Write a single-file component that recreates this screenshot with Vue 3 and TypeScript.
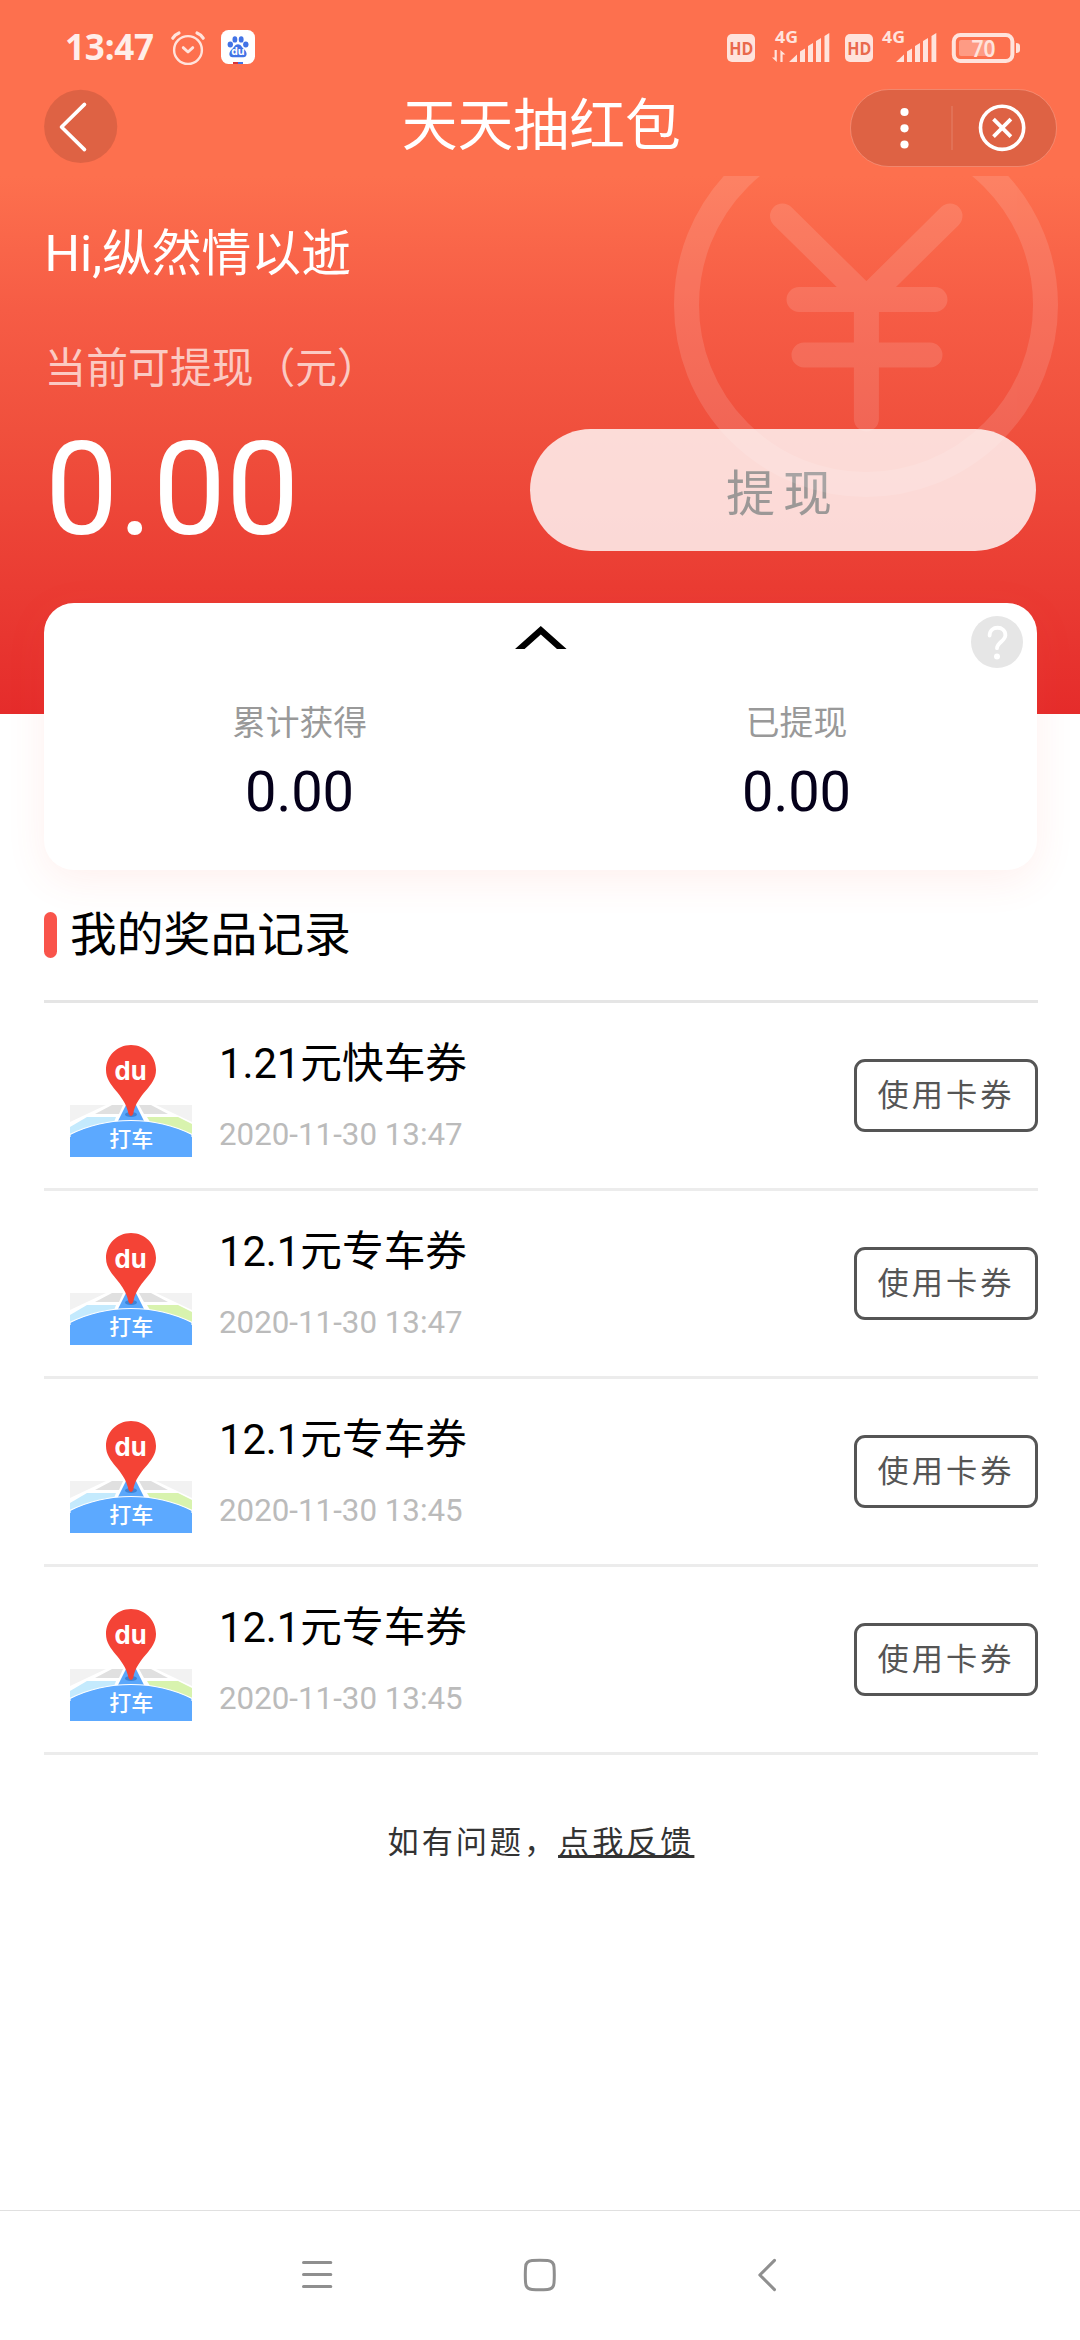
<script setup lang="ts">
interface Prize {
  id: number
  title: string
  time: string
}

interface Stat {
  label: string
  value: string
}

const prizes: Prize[] = [
  { id: 1, title: '1.21元快车券', time: '2020-11-30 13:47' },
  { id: 2, title: '12.1元专车券', time: '2020-11-30 13:47' },
  { id: 3, title: '12.1元专车券', time: '2020-11-30 13:45' },
  { id: 4, title: '12.1元专车券', time: '2020-11-30 13:45' },
]

const stats: Stat[] = [
  { label: '累计获得', value: '0.00' },
  { label: '已提现', value: '0.00' },
]
</script>

<template>
  <div class="screen">
    <section class="hero">
      <svg class="watermark" width="400" height="330" viewBox="666 176 400 330" fill="none">
        <g opacity="0.12" stroke="#fff" stroke-width="25" stroke-linecap="round">
          <circle cx="866" cy="305" r="179.5" />
          <path d="M782.5 216L866.4 298.7L950 216M799 299.5H935M804 355H930M866.4 299V419" />
        </g>
      </svg>

      <header class="status">
        <div class="status-left">
          <span class="clock">13:47</span>
          <svg class="alarm" width="36" height="38" viewBox="170 29 36 38" fill="none" stroke="#ffe3dc" stroke-linecap="round">
            <circle cx="188" cy="50" r="13.9" stroke-width="2.4" />
            <path d="M183.2 47.6L188 52L192.8 47.6" stroke-width="2.8" stroke-linejoin="round" />
            <path d="M172.8 38.2Q175 34.6 179 33M203.2 38.2Q201 34.6 197 33" stroke-width="3.2" />
          </svg>
          <svg class="baidu" width="34" height="34" viewBox="0 0 34 34">
            <rect width="34" height="34" rx="7.5" fill="#fff" />
            <g fill="#4273e6">
              <ellipse cx="9.3" cy="14.4" rx="2.7" ry="3" />
              <ellipse cx="13.9" cy="9.4" rx="2.4" ry="3.2" />
              <ellipse cx="20.2" cy="9.4" rx="2.4" ry="3.2" />
              <ellipse cx="24.8" cy="14.4" rx="2.7" ry="3" />
              <path d="M17 14.2C20 14.2 20.8 17.3 23.4 19.5C26.6 22.3 26.4 27.2 22.4 27.2H11.6C7.6 27.2 7.4 22.3 10.6 19.5C13.2 17.3 14 14.2 17 14.2Z" />
            </g>
            <text x="17" y="25.4" text-anchor="middle" class="paw-text">du</text>
            <rect x="12" y="32" width="5" height="2" fill="#d8343a" />
            <rect x="17" y="32" width="5" height="2" fill="#4273e6" />
          </svg>
        </div>
        <svg class="status-right" width="300" height="60" viewBox="724 10 300 60" fill="#ffe3dc">
          <g v-for="dx in [0, 118]" :key="dx" :transform="`translate(${dx} 0)`">
            <rect x="727" y="34" width="28" height="28" rx="5" />
            <text x="741.2" y="55" text-anchor="middle" textLength="24" lengthAdjust="spacingAndGlyphs" class="hd">HD</text>
          </g>
          <g v-for="dx in [0, 107]" :key="'s' + dx" :transform="`translate(${dx} 0)`">
            <text x="786.5" y="43.2" text-anchor="middle" textLength="23" lengthAdjust="spacingAndGlyphs" class="net">4G</text>
            <path d="M789 62L797 54.6V62ZM800 62V51.6L805 48.6V62ZM808 62V46L813 43V62ZM816 62V41L821 38V62ZM824.5 62V36L829.3 33V62Z" />
          </g>
          <path d="M774.6 50H776.8V62L772 57.4H774.6ZM780.4 62V50L785.4 54.6H782.6V62Z" />
          <rect x="953.8" y="35" width="58.6" height="26" rx="6.5" fill="none" stroke="#ffe3dc" stroke-width="4" />
          <rect x="959" y="40" width="33" height="16" rx="2" opacity="0.38" />
          <path d="M1016 43Q1020 43 1020 46V50Q1020 53 1016 53Z" />
          <text x="983.5" y="56.6" text-anchor="middle" textLength="24" lengthAdjust="spacingAndGlyphs" class="battery">70</text>
        </svg>
      </header>

      <nav class="titlebar">
        <button class="back" aria-label="返回">
          <svg width="74" height="74" viewBox="0 0 74 74" fill="none">
            <circle cx="36.7" cy="37.4" r="36.6" fill="#000" opacity="0.12" />
            <path d="M40.5 15.4L17.5 38L40.5 60.6" stroke="#fff" stroke-width="3.6" stroke-linecap="round" stroke-linejoin="round" />
          </svg>
        </button>
        <h1 class="title">天天抽红包</h1>
        <svg width="207" height="78" viewBox="849.5 89 207 78" fill="none">
          <rect x="850" y="89.5" width="206" height="77" rx="38.5" fill="#000" fill-opacity="0.12" stroke="#fff" stroke-opacity="0.2" />
          <g fill="#fff">
            <circle cx="904" cy="112" r="4.1" />
            <circle cx="904" cy="128.3" r="4.1" />
            <circle cx="904" cy="144.5" r="4.1" />
          </g>
          <path d="M951.5 106V150" stroke="#fff" stroke-opacity="0.2" />
          <circle cx="1001.6" cy="127.8" r="21.6" stroke="#fff" stroke-width="3.6" />
          <path d="M993 119.2L1010.4 136.6M1010.4 119.2L993 136.6" stroke="#fff" stroke-width="3.8" />
        </svg>
      </nav>

      <p class="greeting">Hi,纵然情以逝</p>
      <p class="balance-label">当前可提现（元）</p>
      <div class="balance-row">
        <span class="balance">0.00</span>
        <button class="withdraw">提现</button>
      </div>
    </section>

    <section class="card">
      <svg class="collapse" width="52" height="23" viewBox="0 0 52 23">
        <path d="M0 23L25.8 0L51.6 23H42L25.8 8.6L9.6 23Z" fill="#000" />
      </svg>
      <svg class="help" width="52" height="52" viewBox="0 0 52 52" fill="none">
        <circle cx="26" cy="26" r="26" fill="#e6e6e6" />
        <path d="M18.6 19.6C18.6 9 34.6 9.4 34.4 19.2C34.2 25 26 26.5 26 32.2" stroke="#fff" stroke-width="3.8" stroke-linecap="round" />
        <circle cx="26" cy="40.5" r="3" fill="#fff" />
      </svg>
      <div class="stats">
        <div v-for="s in stats" :key="s.label" class="stat">
          <span class="stat-label">{{ s.label }}</span>
          <span class="stat-value">{{ s.value }}</span>
        </div>
      </div>
    </section>

    <section class="records">
      <h2 class="section-title"><i class="mark"></i>我的奖品记录</h2>
      <ul class="list">
        <li v-for="p in prizes" :key="p.id" class="item">
          <svg class="thumb" width="122" height="112" viewBox="0 0 122 112">
            <path d="M0 60H36L0 77Z" fill="#f2f2f2" />
            <path d="M86 60H122V77Z" fill="#f2f2f2" />
            <path d="M42 60H53L49 69H25Z" fill="#e0e0e0" />
            <path d="M69 60H81L98 69H74Z" fill="#e0e0e0" />
            <path d="M17 72H46L43 80L0 92V82Z" fill="#c4eafd" />
            <path d="M77 72H108L122 79V92L82 80Z" fill="#d8f3ae" />
            <path d="M56 60H66L75 78H47Z" fill="#5aa7fb" />
            <path d="M0 89.5Q28 75.5 61 75.5T122 89.5V112H0Z" fill="#5ca9ff" stroke="#fff" stroke-width="1.2" />
            <rect y="92" width="122" height="20" fill="#5ca9ff" />
            <ellipse cx="61" cy="69.5" rx="6" ry="2.6" fill="#3d83d6" />
            <path d="M61 0C75 0 86 11 86 25C86 42 67 48 63.2 69Q61 73 58.6 69C54.6 48 36 42 36 25C36 11 47 0 61 0Z" fill="#f44336" />
            <text x="60.6" y="35" text-anchor="middle" textLength="32" lengthAdjust="spacingAndGlyphs" class="pin-text">du</text>
            <text x="61.2" y="102" text-anchor="middle" class="taxi-text">打车</text>
          </svg>
          <div class="info">
            <span class="name">{{ p.title }}</span>
            <span class="time">{{ p.time }}</span>
          </div>
          <button class="use">使用卡券</button>
        </li>
      </ul>
      <p class="feedback">如有问题，<a>点我反馈</a></p>
    </section>

    <footer class="sysnav">
      <svg width="480" height="40" viewBox="300 2254 480 40" fill="none" stroke="#8f8f8f" stroke-width="3" stroke-linecap="round" stroke-linejoin="round">
        <path d="M303.5 2262.4H330.8M303.5 2274.6H330.8M303.5 2286.6H330.8" />
        <path d="M532 2260.6Q539.8 2260 547.6 2260.6Q553.6 2261 554 2267Q554.6 2275 554 2283Q553.6 2289 547.6 2289.4Q539.8 2290 532 2289.4Q526 2289 525.6 2283Q525 2275 525.6 2267Q526 2261 532 2260.6Z" />
        <path d="M774.5 2260.4L759.8 2275L774.5 2289.6" />
      </svg>
    </footer>
  </div>
</template>

<style>
body {
  margin: 0;
  background: #fff;
}
</style>

<style scoped>
.screen {
  display: flex;
  flex-direction: column;
  width: 1080px;
  height: 2340px;
  overflow: hidden;
  background: #fff;
  font-family: Roboto, 'Noto Sans CJK SC', sans-serif;
  color: #000;
}
h1, h2, p, ul {
  margin: 0;
  padding: 0;
  font-weight: 400;
}
button {
  padding: 0;
  border: 0;
  background: none;
  font: inherit;
}
svg {
  display: block;
  flex: none;
}

.hero {
  position: relative;
  flex: none;
  box-sizing: border-box;
  height: 713.5px;
  background: linear-gradient(#fd704e 176px, #f65c45 310px, #f0503d 430px, #e52c2b 713px);
  color: #fff;
}
.watermark {
  position: absolute;
  left: 666px;
  top: 176px;
}
.status {
  display: flex;
  justify-content: space-between;
  height: 89px;
  padding: 0 56px 0 65px;
}
.status-left {
  display: flex;
}
.status-right {
  margin-top: 10px;
}
.clock {
  width: 105px;
  margin-top: 27px;
  font: 700 35px/40px 'Noto Sans', sans-serif;
  letter-spacing: -0.2px;
  color: #ffeee9;
}
.alarm {
  margin-top: 29px;
}
.baidu {
  margin: 30px 0 0 15px;
}
.paw-text {
  font: 700 10.5px 'Open Sans', sans-serif;
  fill: #fff;
}
.hd {
  font: 700 18px 'Open Sans', sans-serif;
  fill: #e9694c;
}
.net {
  font: 700 16.5px 'Open Sans', sans-serif;
}
.battery {
  font: 600 23px 'Noto Sans', sans-serif;
}
.titlebar {
  display: flex;
  height: 77px;
  padding: 0 23.5px 0 44px;
}
.back {
  width: 74px;
  height: 74px;
}
.title {
  flex: 1;
  padding-left: 115px;
  font-size: 55.8px;
  line-height: 75px;
  text-align: center;
}
.greeting {
  margin: 58px 0 0 44.5px;
  font-size: 49.8px;
  line-height: 60px;
}
.balance-label {
  margin: 57px 0 0 44.5px;
  font-size: 41.8px;
  line-height: 56px;
  color: rgba(255, 255, 255, 0.7);
}
.balance-row {
  display: flex;
  justify-content: space-between;
  margin: 27px 44px 0 45px;
}
.balance {
  height: 130px;
  font-size: 130.5px;
  line-height: 132px;
}
.withdraw {
  box-sizing: border-box;
  width: 506px;
  height: 122px;
  margin-top: 5px;
  padding-bottom: 2px;
  border-radius: 61px;
  background: rgba(255, 255, 255, 0.8);
  color: #9c9897;
  font-size: 49px;
  letter-spacing: 8px;
}

.card {
  position: relative;
  flex: none;
  height: 267px;
  margin: -110.5px 43px 0 44px;
  border-radius: 30px;
  background: #fff;
  box-shadow: 0 10px 40px rgba(252, 91, 65, 0.09);
}
.collapse {
  margin: 0 auto;
  padding-top: 23px;
}
.help {
  position: absolute;
  top: 13px;
  right: 14px;
}
.stats {
  display: flex;
  margin: 52px -8px 0 7px;
}
.stat {
  flex: 1;
  display: flex;
  flex-direction: column;
  align-items: center;
}
.stat-label {
  font-size: 33.8px;
  line-height: 46px;
  color: #999;
}
.stat-value {
  margin-top: 12px;
  font-size: 56px;
  line-height: 66px;
  color: #05001a;
}

.records {
  flex: 1;
  padding: 0 42px 0 44px;
}
.section-title {
  display: flex;
  align-items: center;
  height: 60px;
  margin-top: 35px;
  font-size: 46.8px;
  line-height: 60px;
}
.mark {
  width: 13px;
  height: 46px;
  margin-right: 13px;
  border-radius: 6.5px;
  background: #f9544b;
}
.list {
  margin-top: 35px;
  border-top: 3px solid #e5e5e5;
  list-style: none;
}
.item {
  display: flex;
  box-sizing: border-box;
  height: 188px;
  padding-left: 26px;
  border-bottom: 3px solid #ececec;
}
.thumb {
  margin-top: 42px;
}
.pin-text {
  font: 700 26px Inter, sans-serif;
  fill: #fff;
}
.taxi-text {
  font: 500 22px 'Noto Sans CJK SC', sans-serif;
  fill: #fff;
}
.info {
  flex: 1;
  display: flex;
  flex-direction: column;
  align-items: flex-start;
  padding-left: 27px;
}
.name {
  margin-top: 32.5px;
  font-size: 41.7px;
  line-height: 56px;
}
.time {
  margin-top: 23px;
  font-size: 31.3px;
  line-height: 40px;
  color: #bbb;
}
.use {
  box-sizing: border-box;
  width: 184px;
  height: 73px;
  margin-top: 56px;
  border: 3px solid #555;
  border-radius: 11px;
  color: #555;
  font-size: 31.2px;
  line-height: 60px;
  letter-spacing: 3px;
}
.feedback {
  margin-top: 63px;
  text-align: center;
  font-size: 31.2px;
  line-height: 50px;
  letter-spacing: 2.9px;
  color: #333;
}
.feedback a {
  text-decoration: underline;
  text-decoration-thickness: 3px;
  text-underline-offset: 2px;
  text-decoration-skip-ink: none;
}

.sysnav {
  display: flex;
  justify-content: center;
  box-sizing: border-box;
  height: 130px;
  padding-top: 43px;
  border-top: 1px solid #e0e0e0;
}
</style>
